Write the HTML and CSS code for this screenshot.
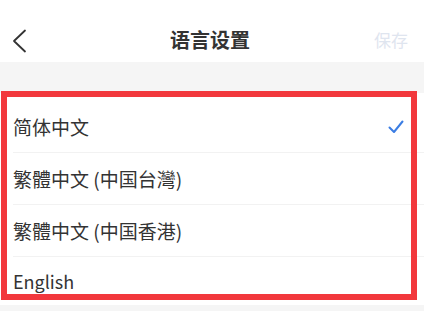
FILE: index.html
```html
<!DOCTYPE html>
<html lang="zh-CN">
<head>
<meta charset="utf-8">
<link rel="stylesheet" href="styles.css">
</head>
<body>
<div class="page">
  <header class="nav">
    <span class="back">
      <svg width="16" height="24" viewBox="0 0 16 24"><polyline points="13,1.5 2,12 13,22.5" fill="none" stroke="#333" stroke-width="1.8" stroke-linecap="round" stroke-linejoin="round"/></svg>
    </span>
    <h1 class="title">语言设置</h1>
    <span class="save">保存</span>
  </header>
  <div class="gap"></div>
  <ul class="list">
    <li class="row">
      <span class="label">简体中文</span>
      <svg class="check" width="16" height="14" viewBox="0 0 16 14"><polyline points="1.5,7.5 6,12 14.5,1.5" fill="none" stroke="#3b7de3" stroke-width="2" stroke-linecap="round" stroke-linejoin="round"/></svg>
    </li>
    <li class="row"><span class="label">繁體中文 (中国台灣)</span></li>
    <li class="row"><span class="label">繁體中文 (中国香港)</span></li>
    <li class="row last"><span class="label latin">English</span></li>
  </ul>
  <div class="foot"></div>
  <div class="highlight"></div>
</div>
</body>
</html>
```

FILE: styles.css
```css
* { box-sizing: border-box; }
html, body {
  margin: 0;
  padding: 0;
  background: #ffffff;
  font-family: "Noto Sans CJK SC", "Noto Sans", sans-serif;
  color: #333333;
}
.page {
  position: relative;
  width: 424px;
  height: 311px;
  overflow: hidden;
  background: #f5f5f5;
}
.nav {
  height: 62px;
  background: #ffffff;
  display: flex;
  align-items: center;
  justify-content: space-between;
  padding: 20px 16px 0 12px;
}
.back {
  width: 40px;
  display: flex;
  align-items: center;
}
.title {
  margin: 0;
  font-size: 20px;
  font-weight: 700;
  color: #333333;
  line-height: 1;
  margin-top: -3px;
}
.save {
  width: 40px;
  text-align: right;
  font-size: 17px;
  color: #dfe5ef;
  line-height: 1;
  margin-top: -3px;
}
.gap {
  height: 31px;
}
.list {
  list-style: none;
  margin: 0;
  padding: 8px 0 0 13px;
  background: #ffffff;
}
.row {
  height: 52px;
  display: flex;
  align-items: center;
  justify-content: space-between;
  border-bottom: 1px solid #f2f2f2;
  padding-right: 20px;
}
.row.last {
  height: 48px;
  border-bottom: none;
}
.label {
  font-size: 19px;
  font-weight: 400;
  color: #333333;
}
.label.latin {
  font-size: 18px;
}
.check {
  display: block;
}
.foot {
  height: 10px;
}
.highlight {
  position: absolute;
  left: 1px;
  top: 91px;
  width: 416px;
  height: 209px;
  border: 6px solid #f2383c;
}
```
